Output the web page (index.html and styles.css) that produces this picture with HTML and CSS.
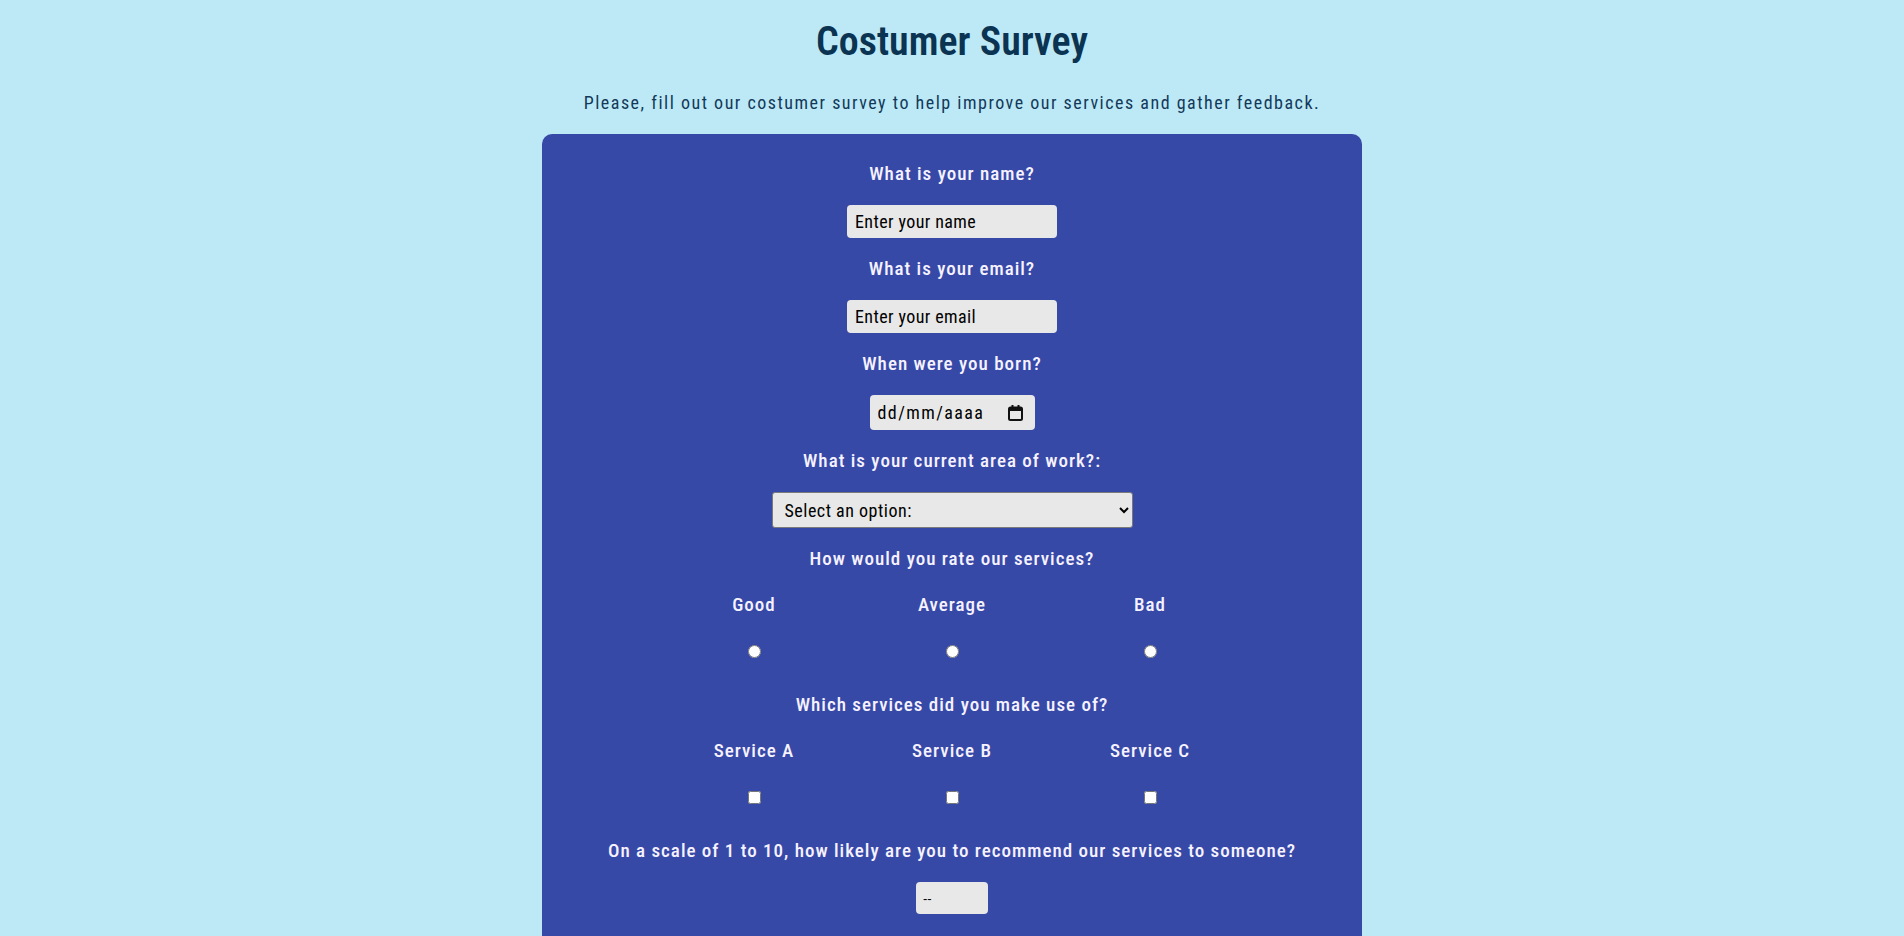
FILE: index.html
```html
<!DOCTYPE html>
<html lang="en">
<head>
<meta charset="utf-8">
<title>Costumer Survey</title>
<link rel="stylesheet" href="styles.css">
</head>
<body>
<header class="page-head">
  <h1 class="title">Costumer Survey</h1>
  <p class="description">Please, fill out our costumer survey to help improve our services and gather feedback.</p>
</header>
<form class="survey">
  <label class="question" for="name">What is your name?</label>
  <input class="field field-text" id="name" type="text" placeholder="Enter your name">

  <label class="question" for="email">What is your email?</label>
  <input class="field field-text" id="email" type="email" placeholder="Enter your email">

  <label class="question" for="born">When were you born?</label>
  <div class="field field-date">
    <input class="date-text" id="born" type="text" placeholder="dd/mm/aaaa">
    <svg class="date-icon" width="15" height="16" viewBox="0 0 15 16" aria-hidden="true">
      <rect x="1" y="2.5" width="13" height="12.5" rx="1.5" fill="none" stroke="#111" stroke-width="2"/>
      <rect x="1" y="2.5" width="13" height="3.5" fill="#111"/>
      <rect x="3.5" y="0" width="2" height="3" fill="#111"/>
      <rect x="9.5" y="0" width="2" height="3" fill="#111"/>
    </svg>
  </div>

  <label class="question" for="area">What is your current area of work?:</label>
  <select class="field field-select" id="area">
    <option>Select an option:</option>
    <option>Technology</option>
    <option>Education</option>
    <option>Health</option>
  </select>

  <p class="question">How would you rate our services?</p>
  <div class="options">
    <label class="option"><span>Good</span><input type="radio" name="rate" value="good"></label>
    <label class="option"><span>Average</span><input type="radio" name="rate" value="average"></label>
    <label class="option"><span>Bad</span><input type="radio" name="rate" value="bad"></label>
  </div>

  <p class="question">Which services did you make use of?</p>
  <div class="options">
    <label class="option"><span>Service A</span><input type="checkbox" value="a"></label>
    <label class="option"><span>Service B</span><input type="checkbox" value="b"></label>
    <label class="option"><span>Service C</span><input type="checkbox" value="c"></label>
  </div>

  <label class="question" for="score">On a scale of 1 to 10, how likely are you to recommend our services to someone?</label>
  <input class="field field-number" id="score" type="number" min="1" max="10" placeholder="--">
</form>
</body>
</html>
```

FILE: styles.css
```css
* { box-sizing: border-box; }

html, body {
  margin: 0;
  padding: 0;
  background: #bde9f6;
}

body {
  font-family: "Roboto Condensed", Roboto, "Liberation Sans", sans-serif;
  font-stretch: condensed;
  color: #0c3353;
}

.page-head {
  display: flex;
  flex-direction: column;
  align-items: center;
}

.title {
  margin: 18px 0 0;
  font-size: 40px;
  font-weight: 600;
  line-height: normal;
  letter-spacing: 0;
  color: #0b3352;
}

.description {
  margin: 27px 0 0;
  font-size: 18px;
  line-height: normal;
  letter-spacing: 1.5px;
  color: #12395a;
}

.survey {
  width: 820px;
  margin: 21px auto 0;
  padding: 29px 0 40px;
  background: #3749a7;
  border-radius: 10px;
  display: flex;
  flex-direction: column;
  align-items: center;
  gap: 20px;
}

.question {
  margin: 0;
  font-size: 19px;
  font-weight: 500;
  line-height: 22px;
  letter-spacing: 1px;
  color: #f6f2ff;
}

.field {
  font-family: inherit;
  font-stretch: condensed;
  background: #e8e8e8;
  color: #000;
  border: none;
  border-radius: 4px;
}

.field-text {
  width: 210px;
  height: 33px;
  padding: 0 8px;
  font-size: 18px;
  letter-spacing: 0.4px;
}

.field-text::placeholder,
.date-text::placeholder,
.field-number::placeholder {
  color: #000;
  opacity: 1;
}

.field-date {
  width: 165px;
  height: 35px;
  padding: 0 12px 0 8px;
  display: flex;
  align-items: center;
  justify-content: space-between;
}

.date-text {
  width: 118px;
  border: none;
  background: transparent;
  padding: 0;
  font-family: inherit;
  font-stretch: condensed;
  font-size: 18px;
  letter-spacing: 1.4px;
  outline: none;
}

.date-icon { flex: none; }

.field-select {
  width: 361px;
  height: 36px;
  padding: 0 6px 0 8px;
  font-size: 18px;
  letter-spacing: 0.5px;
  border: 1px solid #7a7a7a;
  border-radius: 3px;
}

.options {
  width: 594px;
  margin: 4px 0 16px;
  display: flex;
}

.option {
  flex: 1;
  display: flex;
  flex-direction: column;
  align-items: center;
  gap: 29px;
  font-size: 19px;
  font-weight: 500;
  line-height: 22px;
  letter-spacing: 1px;
  color: #f6f2ff;
}

.option input {
  margin: 0;
  width: 13px;
  height: 13px;
}

.field-number {
  width: 72px;
  height: 32px;
  padding: 0 7px;
  font-family: "Liberation Sans", Arial, sans-serif;
  font-stretch: normal;
  font-size: 13px;
}
```
